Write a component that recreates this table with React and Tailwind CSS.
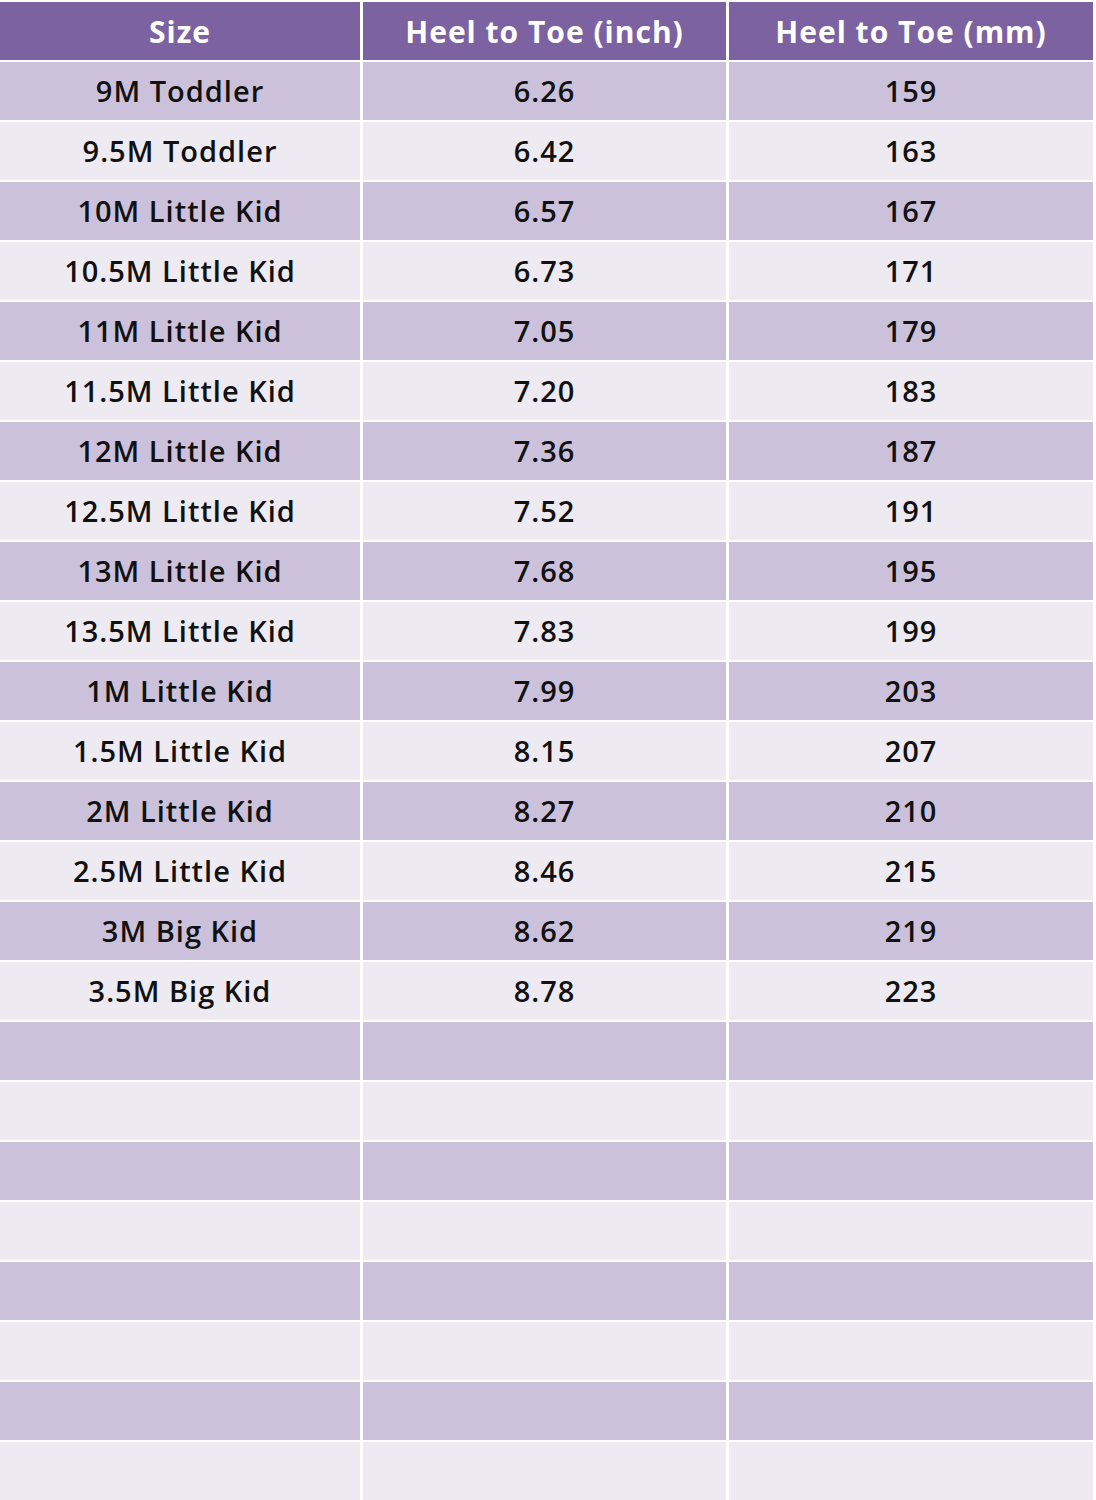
import React from 'react';

const rows = [
  ['9M Toddler', '6.26', '159'],
  ['9.5M Toddler', '6.42', '163'],
  ['10M Little Kid', '6.57', '167'],
  ['10.5M Little Kid', '6.73', '171'],
  ['11M Little Kid', '7.05', '179'],
  ['11.5M Little Kid', '7.20', '183'],
  ['12M Little Kid', '7.36', '187'],
  ['12.5M Little Kid', '7.52', '191'],
  ['13M Little Kid', '7.68', '195'],
  ['13.5M Little Kid', '7.83', '199'],
  ['1M Little Kid', '7.99', '203'],
  ['1.5M Little Kid', '8.15', '207'],
  ['2M Little Kid', '8.27', '210'],
  ['2.5M Little Kid', '8.46', '215'],
  ['3M Big Kid', '8.62', '219'],
  ['3.5M Big Kid', '8.78', '223'],
  ['', '', ''],
  ['', '', ''],
  ['', '', ''],
  ['', '', ''],
  ['', '', ''],
  ['', '', ''],
  ['', '', ''],
  ['', '', ''],
];

const headers = ['Size', 'Heel to Toe (inch)', 'Heel to Toe (mm)'];

const App = () => {
  return (
    <div className="w-[1096px] h-[1500px] bg-white pt-[2px] overflow-hidden" style={{ fontFamily: '"Open Sans", "Noto Sans", sans-serif' }}>
      <div className="grid grid-cols-[360px_363px_364px] gap-x-[3px] gap-y-[2px]">
        {headers.map((h) => (
          <div key={h} className="h-[58px] bg-[#7c62a0] flex items-center justify-center text-white font-bold text-[30px] tracking-[1px]">
            {h}
          </div>
        ))}
        {rows.map((row, i) =>
          row.map((cell, j) => (
            <div
              key={`${i}-${j}`}
              className={`h-[58px] flex items-center justify-center text-[#111111] font-semibold text-[29px] tracking-[1px] ${
                i % 2 === 0 ? 'bg-[#cbc1db]' : 'bg-[#eeeaf1]'
              }`}
            >
              {cell}
            </div>
          ))
        )}
      </div>
    </div>
  );
};

export default App;
